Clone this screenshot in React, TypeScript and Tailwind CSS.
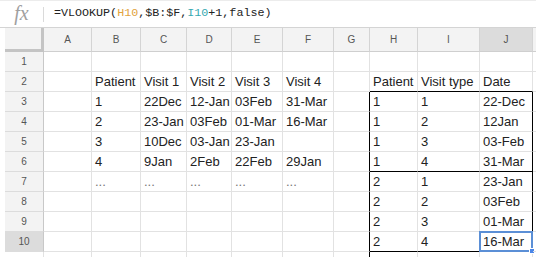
import React from 'react';

const cols = ['A', 'B', 'C', 'D', 'E', 'F', 'G', 'H', 'I', 'J', ''];
const widths = [48, 49, 46, 45, 51, 51, 36, 48, 62, 53, 20];

const data: Record<number, string[]> = {
  2: ['', 'Patient', 'Visit 1', 'Visit 2', 'Visit 3', 'Visit 4', '', 'Patient', 'Visit type', 'Date'],
  3: ['', '1', '22Dec', '12-Jan', '03Feb', '31-Mar', '', '1', '1', '22-Dec'],
  4: ['', '2', '23-Jan', '03Feb', '01-Mar', '16-Mar', '', '1', '2', '12Jan'],
  5: ['', '3', '10Dec', '03-Jan', '23-Jan', '', '', '1', '3', '03-Feb'],
  6: ['', '4', '9Jan', '2Feb', '22Feb', '29Jan', '', '1', '4', '31-Mar'],
  7: ['', '...', '...', '...', '...', '...', '', '2', '1', '23-Jan'],
  8: ['', '', '', '', '', '', '', '2', '2', '03Feb'],
  9: ['', '', '', '', '', '', '', '2', '3', '01-Mar'],
  10: ['', '', '', '', '', '', '', '2', '4', '16-Mar'],
};

const Cell = ({ row, col }: { row: number; col: number }) => {
  const inBox = row >= 3 && row <= 10;
  const rightBlack = inBox && (col === 6 || col === 9);
  const bottomBlack = (row === 2 || row === 6 || row === 10) && col >= 7 && col <= 9;
  const text = data[row]?.[col] ?? '';
  const selected = row === 10 && col === 9;
  return (
    <div
      style={{ width: widths[col] }}
      className={`relative shrink-0 h-5 border-r border-b flex items-end px-[3px] pb-[2px] text-[13px] leading-[15px] whitespace-nowrap ${
        text === '...' ? 'text-[#777]' : 'text-[#222]'
      } ${rightBlack ? 'border-r-black' : 'border-r-[#e2e2e2]'} ${
        bottomBlack ? 'border-b-black' : 'border-b-[#e2e2e2]'
      }`}
    >
      {text}
      {selected && (
        <>
          <div className="absolute -left-px -top-px right-[-1px] bottom-[-1px] border-2 border-[#5b8fd6]" />
          <div className="absolute right-[-3px] bottom-[-3px] w-[6px] h-[6px] bg-[#4a86e8] border border-white" />
        </>
      )}
    </div>
  );
};

const App = () => {
  const rows = [1, 2, 3, 4, 5, 6, 7, 8, 9, 10];
  return (
    <div className="w-[536px] h-[262px] overflow-hidden bg-white font-['Liberation_Sans',Arial,sans-serif]">
      {/* formula bar */}
      <div className="h-[28px] flex items-center border-t border-t-[#ececec] border-b border-b-[#d4d4d4]">
        <div className="w-[44px] flex items-center justify-center border-r border-r-[#dadada] h-[15px]">
          <span className="font-['Liberation_Serif',serif] italic text-[20px] text-[#a0a0a0] leading-none -mt-[3px]">fx</span>
        </div>
        <div className="pl-[10px] font-['Liberation_Mono',monospace] text-[11.7px] text-[#222] whitespace-nowrap">
          =VLOOKUP(<span className="text-[#e2a33c]">H10</span>,$B:$F,<span className="text-[#35a9b1]">I10</span>+1,false)
        </div>
      </div>

      {/* column headers */}
      <div className="flex h-[24px]">
        <div className="w-[5px] shrink-0" />
        <div className="w-[39px] shrink-0 bg-[#f3f3f3] border-r-[3px] border-r-[#c4c4c4] border-b-[3px] border-b-[#c4c4c4]" />
        {cols.map((c, i) => (
          <div
            key={i}
            style={{ width: widths[i] }}
            className={`shrink-0 flex items-center justify-center border-r border-r-[#d4d4d4] border-b border-b-[#cfcfcf] text-[10px] text-[#555] ${
              c === 'J' ? 'bg-[#dcdcdc]' : 'bg-[#f3f3f3]'
            }`}
          >
            {c}
          </div>
        ))}
      </div>

      {rows.map((r) => (
        <div key={r} className="flex">
          <div className="w-[5px] shrink-0" />
          <div
            className={`w-[39px] h-5 shrink-0 flex items-center justify-center border-r border-r-[#c8c8c8] border-b border-b-[#dcdcdc] text-[10px] text-[#555] ${
              r === 10 ? 'bg-[#dcdcdc]' : 'bg-[#f3f3f3]'
            }`}
          >
            {r}
          </div>
          {cols.map((c, i) => (
            <Cell key={i} row={r} col={i} />
          ))}
        </div>
      ))}

      {/* partial next row */}
      <div className="flex h-[5px]">
        <div className="w-[44px] shrink-0 border-r border-r-[#e2e2e2]" />
        {cols.map((c, i) => (
          <div
            key={i}
            style={{ width: widths[i] }}
            className={`shrink-0 border-r ${i === 6 ? 'border-r-black' : 'border-r-[#e2e2e2]'}`}
          />
        ))}
      </div>
    </div>
  );
};

export default App;
